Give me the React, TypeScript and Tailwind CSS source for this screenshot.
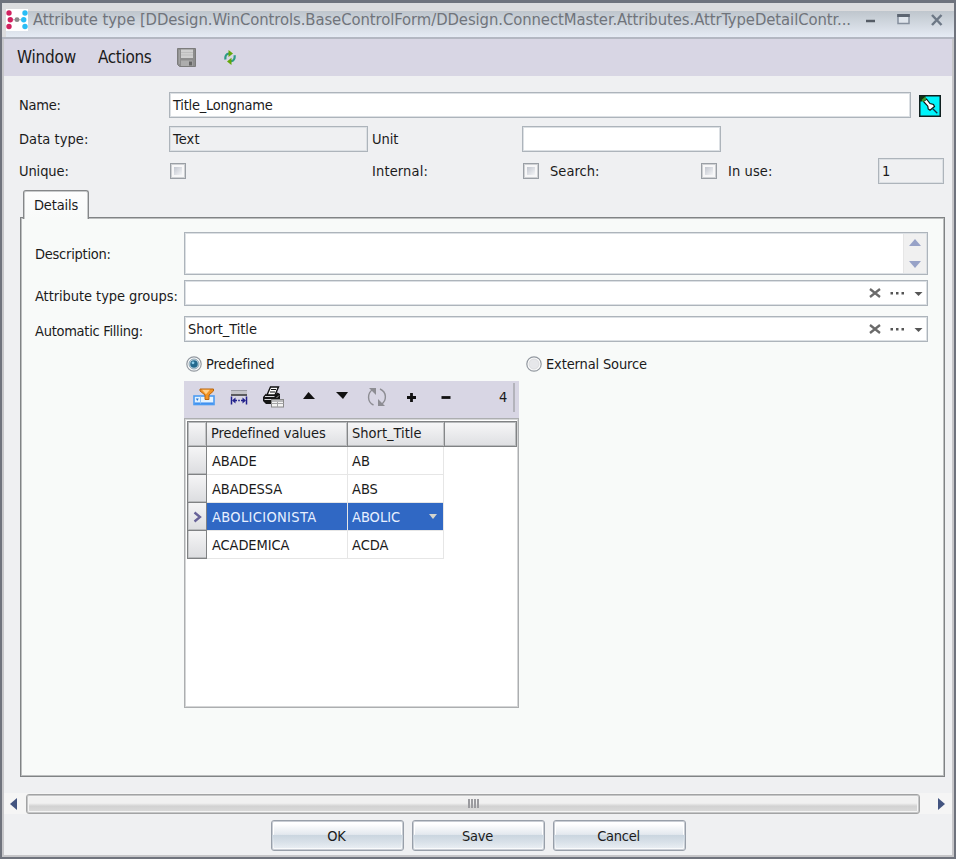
import React, { useState } from 'react';
import clsx from 'clsx';

type Row = { value: string; short: string };

const rows: Row[] = [
  { value: 'ABADE', short: 'AB' },
  { value: 'ABADESSA', short: 'ABS' },
  { value: 'ABOLICIONISTA', short: 'ABOLIC' },
  { value: 'ACADEMICA', short: 'ACDA' },
];

const LogoIcon = () => (
  <svg width="22" height="22" viewBox="0 0 22 22" className="mr-[5px]">
    <rect width="22" height="22" fill="#fff" />
    <g fill="#d0215f">
      <circle cx="3" cy="4" r="2.7" /><circle cx="4.3" cy="10.7" r="2.7" /><circle cx="3" cy="17.5" r="2.7" />
    </g>
    <g fill="#28bdf5">
      <circle cx="19" cy="4" r="2.7" /><circle cx="17.7" cy="10.7" r="2.7" /><circle cx="19" cy="17.5" r="2.7" />
    </g>
    <path d="M7 10.7h8" stroke="#bbb" strokeWidth="1.2" />
    <circle cx="11" cy="10.7" r="2.4" fill="#8a8a8a" />
  </svg>
);

const SaveIcon = () => (
  <svg width="19" height="19" viewBox="0 0 19 19">
    <path d="M0.5 0.5h18v18h-16l-2-2z" fill="#8d8d8d" stroke="#7c7c7c" />
    <rect x="4" y="1.5" width="12" height="8.5" fill="#cfcfcf" />
    <path d="M4 4.5h12M4 7h12" stroke="#bdbdbd" />
    <rect x="4" y="12.5" width="11.5" height="5.5" fill="#adadad" />
    <rect x="12" y="13.5" width="3" height="4" fill="#666" />
    <path d="M2.3 2v14" stroke="#a8a8a8" />
  </svg>
);

const RefreshIcon = () => (
  <svg width="12" height="15" viewBox="0 0 12 15" fill="none" className="-ml-px">
    <path d="M1.5 9.5C.8 6 2.5 3.6 5 3.6" stroke="#2e9c86" strokeWidth="2.2" />
    <path d="M4.5 0L9 3.5 4.5 7z" fill="#63a70a" />
    <path d="M10.5 5.2c.7 3.5-1 6-3.5 6" stroke="#2e9c86" strokeWidth="2.2" />
    <path d="M7.5 7.8L3 11.4 7.5 15z" fill="#63a70a" />
  </svg>
);

const PinIcon = () => (
  <svg width="22" height="22" viewBox="0 0 22 22" className="mt-px">
    <rect x="0.75" y="0.75" width="20.5" height="20.5" fill="#00f4fb" stroke="#102020" strokeWidth="1.5" />
    <path d="M1 1h5.5v2L3 6.5H1z" fill="#123012" />
    <path d="M4.5 6.5L7.5 4l3.5 4.5 3.5 1 1 2-4.5 3.8-1.8-1.3-.4-2.8z" fill="#fff" stroke="#111" strokeWidth="1.2" />
    <path d="M3.3 6l3.4-3" stroke="#3f9a2a" strokeWidth="2.4" />
    <path d="M13.5 13.5l4.8 4.8" stroke="#134" strokeWidth="1.3" />
  </svg>
);

const FilterIcon = () => (
  <svg width="22" height="18" viewBox="0 0 22 18">
    <rect x="1" y="8" width="20" height="8.5" fill="#e4f3ff" stroke="#4c9cf2" strokeWidth="1.6" />
    <path d="M1.5 15.2h19" stroke="#3d8ff0" strokeWidth="1.5" />
    <path d="M7.5 8.5v7" stroke="#8ec3f8" />
    <path d="M2.8 10.5h3l-1.5 2.5z" fill="#2577d8" />
    <path d="M7 1h13.5v2l-4.500 4v4.500h-4V7L7 3z" fill="#f39422" stroke="#b9650f" />
    <path d="M9 1.8h8l-4 4.5z" fill="#ffd08c" />
  </svg>
);

const WidthIcon = () => (
  <svg width="18" height="17" viewBox="0 0 18 17">
    <rect x="1" y="1" width="16" height="4.5" fill="#c3c3c8" />
    <path d="M1 1.5h16" stroke="#9a9aa2" />
    <path d="M1 6h16" stroke="#333" strokeWidth="1.5" />
    <path d="M1.5 7.5v8M16.5 7.5v8" stroke="#22228c" strokeWidth="1.5" />
    <path d="M4 11.5h3M11 11.5h3" stroke="#22228c" strokeWidth="1.5" />
    <path d="M2 11.5l3.5-3v6zM16 11.5l-3.5-3v6z" fill="#22228c" />
    <path d="M8.2 11.5h1.6" stroke="#22228c" strokeWidth="1.5" />
  </svg>
);

const PrintIcon = () => (
  <svg width="23" height="22" viewBox="0 0 23 22">
    <path d="M8.5 1h8l-3.5 8H5z" fill="#fff" stroke="#111" strokeWidth="1.4" />
    <path d="M9 3.5h5M8 6h5" stroke="#111" strokeWidth="1.2" />
    <path d="M4 7.5L1 11v4l3 3h10l4-4V8l-2.5-1.5-3 2.5H5z" fill="#151515" />
    <path d="M3 10.5h9.5M2.5 13.5h9" stroke="#d5d5d8" />
    <path d="M14.5 12l2.5-2.5" stroke="#999" />
    <rect x="9.5" y="13.5" width="12" height="7.5" fill="#f3f3f3" stroke="#888" />
    <path d="M10 15h11" stroke="#b9b9bb" strokeWidth="2" />
    <path d="M9.5 17.5h12M15.5 16v5" stroke="#a4a4a6" />
  </svg>
);

const CycleIcon = () => (
  <svg width="20" height="20" viewBox="0 0 20 20" fill="none" stroke="#8d8d93" strokeWidth="1.4">
    <path d="M6.5 18C0 15 0 6 6 2.5" />
    <path d="M2 1h7v7z" fill="#8d8d93" stroke="none" />
    <path d="M13 2c7 3 7 12 1 15.5" />
    <path d="M11 12v7h7z" fill="#8d8d93" stroke="none" />
  </svg>
);

const Tri = ({ d, w, h, fill }: { d: string; w: number; h: number; fill: string }) => (
  <svg width={w} height={h} viewBox={`0 0 ${w} ${h}`}><path d={d} fill={fill} /></svg>
);

const line = 'border border-[#adb4bb] shadow-[inset_0_0_0_1px_#dce0e4]';
const field = clsx(line, 'h-[26px] pl-[3px] pr-1 flex items-center');
const headCell = 'border-r border-[#858789] pl-1 pt-[3px] shadow-[inset_-1px_0_0_#c3c4c6]';

const Checkbox = () => (
  <span className="w-4 h-4 border border-[#9a9fa5] shadow-[inset_0_0_0_1px_#cfd1d4] bg-[#f7f7f8] p-[3px] block">
    <span className="block w-full h-full bg-linear-to-br from-[#c2c6cf] to-[#f4f5f7]" />
  </span>
);

const Radio = ({ checked, label, onClick }: { checked: boolean; label: string; onClick: () => void }) => (
  <button onClick={onClick} className="flex items-center gap-1 h-4 tracking-[-0.14px]">
    <svg width="16" height="16" viewBox="0 0 16 16">
      <circle cx="8" cy="8" r="7.2" fill="#fafafa" stroke="#9298a0" strokeWidth="1.2" />
      <circle cx="8" cy="8" r="5" fill={checked ? '#cfe0ea' : '#e6e7ea'} stroke={checked ? '#8aa4b3' : '#dcdde0'} />
      {checked && <circle cx="8" cy="8" r="3.8" fill="#256a8e" />}
      {checked && <circle cx="7" cy="6.8" r="1.4" fill="#8fd0ec" />}
    </svg>
    {label}
  </button>
);

const Combo = ({ value }: { value?: string }) => (
  <div className={clsx(field, 'w-[744px] bg-white')}>
    <span className="flex-1 tracking-[-0.05px]">{value}</span>
    <svg width="60" height="14" viewBox="0 0 60 14" className="-mr-px">
      <path d="M6 3l10 8M16 3l-10 8" stroke="#6a6a6a" strokeWidth="2.3" />
      <path d="M26.500 6H29v2.500h-2.500zM32 6h2.500v2.500H32zM37.500 6H40v2.500h-2.500z" fill="#555" />
      <path d="M50.500 6h8l-4 4z" fill="#555" />
    </svg>
  </div>
);

const DialogButton = ({ children }: { children: React.ReactNode }) => (
  <button className="w-[133px] h-[31px] border border-[#989fa9] rounded-[3px] bg-linear-to-b from-white from-10% via-[#e4e9ef] via-45% to-[#eff3f7] shadow-[inset_0_0_0_1px_#c9cdd4,inset_0_0_0_2px_#fff]">
    <span className="flex w-full h-full items-center justify-center pr-[2px] bg-linear-to-b from-transparent from-46% via-[#cbd6e0] via-50% to-transparent">{children}</span>
  </button>
);

export default function App() {
  const [source, setSource] = useState('predefined');
  const [selected, setSelected] = useState(2);

  return (
    <div className="w-[956px] h-[859px] overflow-hidden flex flex-col bg-[#eff0f2] border-2 border-t-[3px] border-[#6f737d] text-[#1b1b1b] text-[14.5px] leading-4 tracking-[-0.25px] whitespace-nowrap font-['DejaVu_Sans_Condensed','DejaVu_Sans',sans-serif]">
      <header className="h-[36px] shrink-0 flex items-center pl-1 border-b-2 border-[#b3b7c2] bg-[#dcdcde]">
        <div className="h-full w-full flex items-center bg-linear-to-b from-transparent from-24% via-[#bfc6cd] via-24% to-[#e5ebf4]">
          <LogoIcon />
          <h1 className="w-[822px] text-[16.5px] leading-5 tracking-[-0.08px] text-[#70747b]">
            Attribute type [DDesign.WinControls.BaseControlForm/DDesign.ConnectMaster.Attributes.AttrTypeDetailContr...
          </h1>
          <svg width="80" height="14" viewBox="0 0 80 14" className="ml-[10px] -mt-px">
            <path d="M1 8h9" stroke="#555c66" strokeWidth="2.5" />
            <rect x="33" y="2" width="11" height="8.5" fill="#dfe5ec" stroke="#858f9d" strokeWidth="1.5" />
            <path d="M32.2 2.5h12.6" stroke="#5c6571" strokeWidth="3" />
            <path d="M67 2l9.5 10M76.5 2l-9.5 10" stroke="#6d7886" strokeWidth="2.5" />
          </svg>
        </div>
      </header>

      <div className="flex-1 min-h-0 flex flex-col border-2 border-t-0 border-[#c6c6c9]">
        <nav className="h-[37px] shrink-0 bg-[#d8d6e4] flex items-center pl-[13px] text-[17px]">
          <span className="w-[81px] -mt-px tracking-[-0.2px]">Window</span>
          <span className="w-[79px] -mt-px tracking-[-0.35px]">Actions</span>
          <span className="w-12"><SaveIcon /></span>
          <RefreshIcon />
        </nav>

        <section className="pl-[15px] pt-4 flex flex-col">
          <div className="flex items-center">
            <label className="w-[150px]">Name:</label>
            <div className={clsx(field, 'w-[742px] bg-white mr-2')}>Title_Longname</div>
            <PinIcon />
          </div>
          <div className="flex items-center mt-2">
            <label className="w-[150px] tracking-[0.05px]">Data type:</label>
            <div className={clsx(field, 'w-[199px] tracking-[0.15px]')}>Text</div>
            <label className="w-[154px] pl-1 tracking-[-0.05px]">Unit</label>
            <div className={clsx(field, 'w-[199px] bg-white')} />
          </div>
          <div className="flex items-center mt-[6px]">
            <label className="w-[151px] tracking-[-0.1px]">Unique:</label>
            <Checkbox />
            <label className="w-[337px] pl-[186px] tracking-[0.15px]">Internal:</label>
            <Checkbox />
            <label className="w-[162px] pl-[11px] tracking-[0.05px]">Search:</label>
            <Checkbox />
            <label className="w-[161px] pl-[11px] tracking-[0.1px]">In use:</label>
            <div className={clsx(field, 'w-[66px]')}>1</div>
          </div>
        </section>

        <section className="mx-4 mr-2 mt-[6px]">
          <div className="relative z-10 ml-[3px] -mb-[2px] w-[66px] h-[29px] border border-b-0 border-[#858789] rounded-t-[3px] bg-linear-to-b from-[#fdfdfd] to-[#f8faf9] shadow-[inset_1px_0_0_#c8cacb,inset_-1px_0_0_#c8cacb,inset_0_1px_0_#c8cacb] flex items-center justify-center tracking-[-0.15px] pb-px">
            Details
          </div>
          <div className="w-[925px] h-[560px] border border-[#808385] shadow-[inset_0_0_0_1px_#bcbebf] bg-[#f8faf9] pl-[14px] pt-[14px]">
            <div className="flex items-center">
              <label className="w-[149px]">Description:</label>
              <div className={clsx(line, 'w-[744px] h-[43px] bg-white flex justify-end p-px')}>
                <div className="w-[23px] bg-[#f0f0f0] border-l border-[#e6e6e6] flex flex-col items-center justify-between py-[5px]">
                  <Tri w={12} h={7} d="M0 7l6-7 6 7z" fill="#97a2c7" />
                  <Tri w={12} h={7} d="M0 0l6 7 6-7z" fill="#97a2c7" />
                </div>
              </div>
            </div>
            <div className="flex items-center mt-[5px]">
              <label className="w-[149px] pt-[6px] tracking-[-0.06px]">Attribute type groups:</label>
              <Combo />
            </div>
            <div className="flex items-center mt-[10px]">
              <label className="w-[149px] pt-[3px] tracking-[-0.28px]">Automatic Filling:</label>
              <Combo value="Short_Title" />
            </div>

            <div className="ml-[149px] mt-[14px] pl-[2px] flex">
              <div className="w-[340px]">
                <Radio label="Predefined" checked={source === 'predefined'} onClick={() => setSource('predefined')} />
              </div>
              <Radio label="External Source" checked={source === 'external'} onClick={() => setSource('external')} />
            </div>

            <div className="ml-[149px] mt-[9px] w-[335px]">
              <div className="h-[37px] bg-[#d8d6e4] flex items-center pl-[9px] pb-[5px]">
                <span className="w-[37px]"><FilterIcon /></span>
                <span className="w-8"><WidthIcon /></span>
                <span className="w-[41px]"><PrintIcon /></span>
                <span className="w-[33px] pb-[3px]"><Tri w={12} h={7} d="M0 7l5.5-7L12 7z" fill="#111" /></span>
                <span className="w-[31px] pb-[3px]"><Tri w={12} h={7} d="M0 0h12L7 7z" fill="#111" /></span>
                <span className="w-10"><CycleIcon /></span>
                <svg width="9" height="9" viewBox="0 0 9 9" className="mr-[25px]"><path d="M4.5 0v9M0 4.5h9" stroke="#111" strokeWidth="2.8" /></svg>
                <svg width="10" height="9" viewBox="0 0 10 9"><path d="M0.5 4.5h9" stroke="#111" strokeWidth="2.8" /></svg>
                <span className="flex-1 text-right pr-[6px]">4</span>
                <span className="w-[2px] h-[29px] bg-[#b3b3bb] mr-1" />
              </div>
              <div className="h-[290px] border border-[#acaeb0] shadow-[inset_0_0_0_1px_#d5d6d7] bg-white p-[2px]">
                <div className="flex h-[26px] w-[330px] border border-[#808284] shadow-[inset_0_0_0_1px_#b9bbbd] bg-linear-to-b from-[#f7f7f8] to-[#dedfe2]">
                  <span className={clsx(headCell, 'w-[19px]')} />
                  <span className={clsx(headCell, 'w-[141px] tracking-[-0.1px]')}>Predefined values</span>
                  <span className={clsx(headCell, 'w-[97px] tracking-[0px]')}>Short_Title</span>
                </div>
                {rows.map((r, i) => (
                  <div key={r.value} onClick={() => setSelected(i)} className="flex h-7">
                    <span className="w-5 border border-t-0 border-[#808284] shadow-[inset_0_-1px_0_#b9bbbd,inset_1px_0_0_#c9cacc] bg-linear-to-b from-[#f5f5f6] to-[#dcdde0] flex items-center justify-center">
                      {i === selected && (
                        <svg width="9" height="12" viewBox="0 0 9 12"><path d="M1.5 1.5L7 6l-5.500 4.500" fill="none" stroke="#676298" strokeWidth="2.3" /></svg>
                      )}
                    </span>
                    <span className={clsx('w-[141px] border-r border-b border-[#e6e6e6] pl-[5px] flex items-center', i === selected ? 'bg-[#3068c4] text-[#e8f0ff] tracking-[0.35px]' : 'tracking-[-0.1px]')}>
                      {r.value}
                    </span>
                    <span className={clsx('w-[96px] border-r border-b border-[#e6e6e6] pl-1 pr-[6px] flex items-center justify-between tracking-[0px]', i === selected && 'bg-[#3068c4] text-[#e8f0ff]')}>
                      {r.short}
                      {i === selected && <Tri w={8} h={5} d="M0 0h8L4 5z" fill="#d4d4cd" />}
                    </span>
                  </div>
                ))}
              </div>
            </div>
          </div>
        </section>

        <div className="mt-4 h-[21px] shrink-0 bg-[#f5f5f5] flex items-center justify-between pl-[6px] pr-[7px]">
          <Tri w={7} h={12} d="M7 0v12L0 6z" fill="#435480" />
          <div className="w-[894px] h-5 ml-[9px] mr-auto border border-[#a2a3a4] shadow-[inset_0_0_0_1px_#c5c6c7,inset_0_0_0_2px_#f4f4f4] rounded-[3px] bg-linear-to-b from-[#f1f1f1] from-45% via-[#d2d2d2] via-62% to-[#dcdcdc] flex items-center justify-center gap-px">
            {[0, 1, 2, 3].map((n) => <span key={n} className="w-[2px] h-[9px] bg-[#9b9b9f]" />)}
          </div>
          <Tri w={7} h={12} d="M0 0v12l7-6z" fill="#435480" />
        </div>

        <footer className="flex gap-2 pl-[267px] mt-[6px]">
          <DialogButton>OK</DialogButton>
          <DialogButton>Save</DialogButton>
          <DialogButton>Cancel</DialogButton>
        </footer>
      </div>
    </div>
  );
}
